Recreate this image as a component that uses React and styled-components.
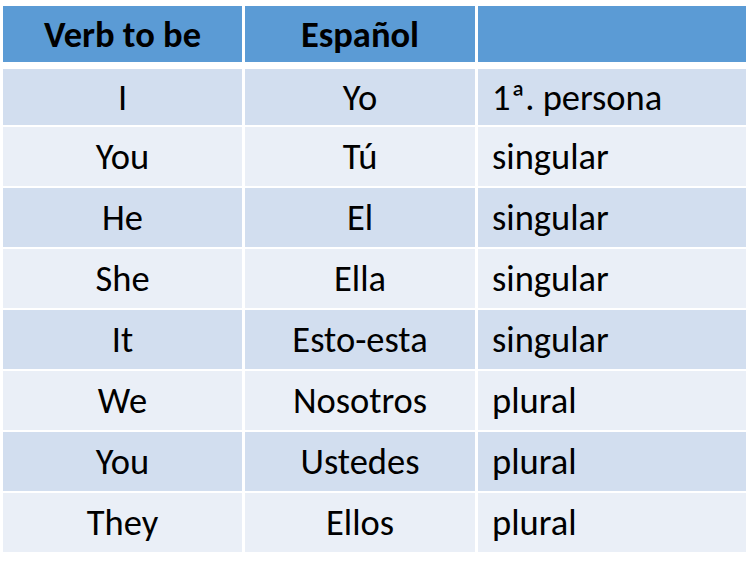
import React from 'react';
import styled, { createGlobalStyle } from 'styled-components';

const GlobalStyle = createGlobalStyle`
    html, body {
        margin: 0;
        padding: 0;
        background: #fff;
    }
    body {
        font-family: Carlito, Calibri, Lato, "Noto Sans", sans-serif;
        color: #000;
    }
`;

const Page = styled.div`
    width: 752px;
    height: 567px;
    padding: 6px 6px 0 3px;
    box-sizing: border-box;
`;

const Table = styled.div`
    display: flex;
    flex-direction: column;
    gap: 2px;
    width: 743px;
`;

const Row = styled.div`
    display: grid;
    grid-template-columns: 239px 230px 268px;
    column-gap: 3px;
    height: ${({ h }) => h}px;
    margin-bottom: ${({ mb }) => mb || 0}px;
`;

const Cell = styled.div`
    display: flex;
    align-items: center;
    justify-content: ${({ align }) => (align === 'left' ? 'flex-start' : 'center')};
    padding-left: ${({ align }) => (align === 'left' ? '14px' : '0')};
    background: ${({ bg }) => bg};
    font-size: 36.5px;
    font-weight: ${({ bold }) => (bold ? 700 : 400)};
    white-space: nowrap;
`;

const HEADER = '#5B9BD5';
const BAND1 = '#D2DEEF';
const BAND2 = '#EAEFF7';

const rows = [
    ['I', 'Yo', '1ª. persona'],
    ['You', 'Tú', 'singular'],
    ['He', 'El', 'singular'],
    ['She', 'Ella', 'singular'],
    ['It', 'Esto-esta', 'singular'],
    ['We', 'Nosotros', 'plural'],
    ['You', 'Ustedes', 'plural'],
    ['They', 'Ellos', 'plural'],
];

export default function App() {
    return (
        <Page>
            <GlobalStyle />
            <Table>
                <Row h={56} mb={5}>
                    <Cell bg={HEADER} bold>Verb to be</Cell>
                    <Cell bg={HEADER} bold>Español</Cell>
                    <Cell bg={HEADER} bold align="left"></Cell>
                </Row>
                {rows.map((r, i) => {
                    const bg = i % 2 === 0 ? BAND1 : BAND2;
                    return (
                        <Row key={i} h={i === 0 ? 56 : 59}>
                            <Cell bg={bg}>{r[0]}</Cell>
                            <Cell bg={bg}>{r[1]}</Cell>
                            <Cell bg={bg} align="left">{r[2]}</Cell>
                        </Row>
                    );
                })}
            </Table>
        </Page>
    );
}
